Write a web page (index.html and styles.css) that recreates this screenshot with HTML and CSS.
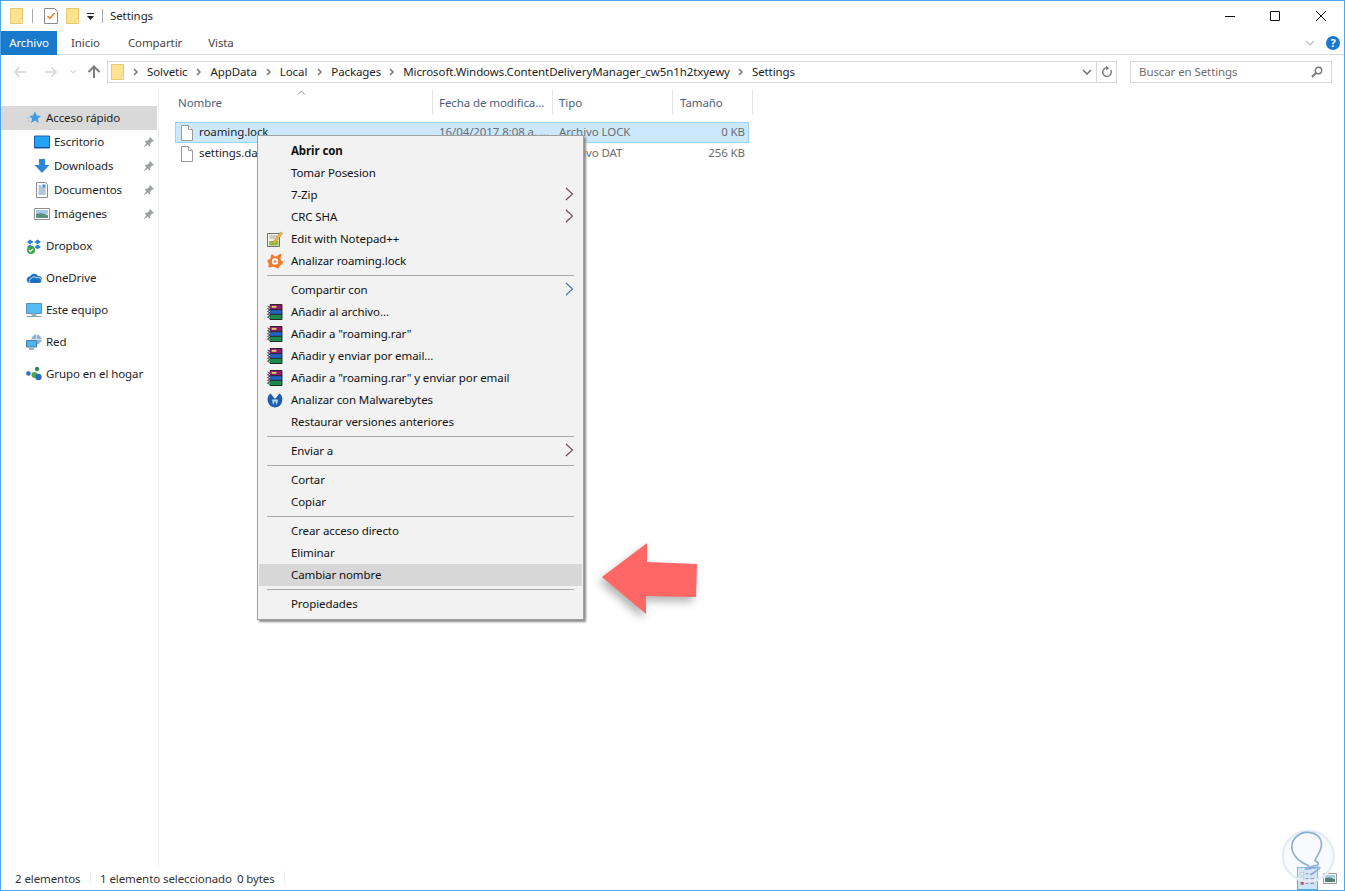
FILE: index.html
```html
<!DOCTYPE html>
<html lang="es">
<head>
<meta charset="utf-8">
<title>Settings</title>
<link rel="stylesheet" href="styles.css">
</head>
<body>
<svg class="defs" width="0" height="0" aria-hidden="true">
  <symbol id="folder" viewBox="0 0 14 18"><path d="M.5 1.500h12v15H.5z" fill="#fde38f" stroke="#e6c86e"/><path d="M10 12h2.500v4.500H10z" fill="#fff3c4" stroke="#e6c86e" stroke-width=".7"/></symbol>
  <symbol id="file" viewBox="0 0 12 16"><path d="M.5.500h7l4 4v11H.5z" fill="#fff" stroke="#9a9a9a"/><path d="M7.500.500v4h4" fill="#f3f3f3" stroke="#9a9a9a"/></symbol>
  <symbol id="pin" viewBox="0 0 12 12"><path d="M7 1l4 4-1 .8-.8-.3-2 2 .1 2-1 .8-1.600-1.800L1.500 11 1 10.500l2.500-3.200L1.700 5.700l.8-1 2 .1 2-2L6.200 2z" fill="#9ba0a6"/></symbol>
  <symbol id="rar" viewBox="0 0 17 17"><path d="M3 .5h13v5.500H3z" fill="#8e1a6c"/><path d="M3 6h13v5H3z" fill="#2461c4"/><path d="M3 11h13v5.500H3z" fill="#1c8a4c"/><path d="M3 .5h13M3 6h13M3 11h13M3 16.500h13" stroke="#1d1d1d" stroke-width="1"/><path d="M16 .5v16" stroke="#1d1d1d" stroke-width=".8"/><path d="M.5 2l3 1.500-3 1.500 3 1.500-3 1.500 3 1.500-3 1.500 3 1.500-3 1.500 3 1.500" fill="none" stroke="#3c3c3c" stroke-width="1"/><path d="M5 2h5v2H5z" fill="#e8cf6a"/></symbol>
  <symbol id="chev" viewBox="0 0 8 8"><path d="M2 1l3 3-3 3" fill="none" stroke="#777" stroke-width="1.500"/></symbol>
  <symbol id="sub" viewBox="0 0 9 14"><path d="M1 1l6.500 6L1 13" fill="none" stroke="currentColor" stroke-width="1.100"/></symbol>
</svg>

<div class="window">
  <header class="titlebar">
    <svg class="ic-16 t-folder"><use href="#folder"/></svg>
    <span class="t-sep"></span>
    <svg class="ic-16 t-check" viewBox="0 0 14 18"><path d="M.5 1.500h10l3 3v12H.5z" fill="#fff" stroke="#8a8a8a"/><path d="M3.500 9l2.500 2.500L10.500 6" fill="none" stroke="#ee7b2c" stroke-width="1.500"/></svg>
    <svg class="ic-16 t-folder2"><use href="#folder"/></svg>
    <svg class="t-drop" viewBox="0 0 9 9"><path d="M1 1.500h7" stroke="#222"/><path d="M1 4h7L4.500 8z" fill="#222"/></svg>
    <span class="t-sep t-sep2"></span>
    <span class="t-name">Settings</span>
    <div class="winctl">
      <svg viewBox="0 0 12 12"><path d="M1 6.500h10" stroke="#111"/></svg>
      <svg viewBox="0 0 12 12"><path d="M1.500 1.500h9v9h-9z" fill="none" stroke="#111"/></svg>
      <svg viewBox="0 0 12 12"><path d="M1 1l10 10M11 1L1 11" stroke="#111"/></svg>
    </div>
  </header>

  <nav class="tabs">
    <span class="tab tab-file">Archivo</span>
    <span class="tab tab-inicio">Inicio</span>
    <span class="tab tab-comp">Compartir</span>
    <span class="tab tab-vista">Vista</span>
    <div class="tabs-right">
      <svg class="rib-chev" viewBox="0 0 10 6"><path d="M1 1l4 4 4-4" fill="none" stroke="#b9bcc2" stroke-width="1.200"/></svg>
      <span class="help">?</span>
    </div>
  </nav>

  <div class="addressrow">
    <div class="navbtns">
      <svg class="n-back" viewBox="0 0 14 12"><path d="M13 6H2M6.500 1.500L2 6l4.500 4.500" fill="none" stroke="#d6d6d6" stroke-width="1.600"/></svg>
      <svg class="n-fwd" viewBox="0 0 14 12"><path d="M1 6h11M7.500 1.500L12 6l-4.500 4.500" fill="none" stroke="#d6d6d6" stroke-width="1.600"/></svg>
      <svg class="n-down" viewBox="0 0 8 6"><path d="M1 1l3 3 3-3" fill="none" stroke="#d6d6d6" stroke-width="1.200"/></svg>
      <svg class="n-up" viewBox="0 0 14 14"><path d="M7 13V2M1.500 7L7 1.500 12.500 7" fill="none" stroke="#7d7d7d" stroke-width="2"/></svg>
    </div>
    <div class="address">
      <svg class="ic-16 a-folder"><use href="#folder"/></svg>
      <svg class="crumb-sep"><use href="#chev"/></svg><span class="crumb c1">Solvetic</span>
      <svg class="crumb-sep"><use href="#chev"/></svg><span class="crumb c2">AppData</span>
      <svg class="crumb-sep"><use href="#chev"/></svg><span class="crumb c3">Local</span>
      <svg class="crumb-sep"><use href="#chev"/></svg><span class="crumb c4">Packages</span>
      <svg class="crumb-sep"><use href="#chev"/></svg><span class="crumb c5">Microsoft.Windows.ContentDeliveryManager_cw5n1h2txyewy</span>
      <svg class="crumb-sep"><use href="#chev"/></svg><span class="crumb c6">Settings</span>
      <svg class="a-drop" viewBox="0 0 10 6"><path d="M1 1l4 4 4-4" fill="none" stroke="#6e6e6e" stroke-width="1.500"/></svg>
      <button class="a-refresh"><svg viewBox="0 0 12 12"><path d="M9.800 4A4.300 4.300 0 1 1 6 1.800" fill="none" stroke="#7c7c7c" stroke-width="1.500"/><path d="M5 .0l3.500 2L5 4.200z" fill="#7c7c7c"/></svg></button>
    </div>
    <div class="search">
      <span>Buscar en Settings</span>
      <svg viewBox="0 0 12 12"><circle cx="7.500" cy="4.500" r="3.200" fill="none" stroke="#777" stroke-width="1.400"/><path d="M5 7l-4 4" stroke="#777" stroke-width="2"/></svg>
    </div>
  </div>

  <main class="main">
    <aside class="sidebar">
      <div class="nav-group">
        <div class="nav-item active"><svg class="nav-ic" viewBox="0 0 16 16"><path d="M9 1.500l1.700 4 4.300.4-3.300 2.800 1 4.300L9 10.400 5 13l1-4.300-2.700-2.800 3.700-.4z" fill="#3d9be8"/><path d="M0 8h4M1 11h3" stroke="#9ccbf2"/></svg><span>Acceso rápido</span></div>
        <div class="nav-item sub"><svg class="nav-ic" viewBox="0 0 16 16"><path d="M.5 2h15v12H.5z" fill="#23a4f3" stroke="#1a62b0"/><path d="M1 13h14v1H1z" fill="#0b4f99"/></svg><span>Escritorio</span><svg class="pin"><use href="#pin"/></svg></div>
        <div class="nav-item sub"><svg class="nav-ic" viewBox="0 0 16 16"><path d="M5 1h6v6h4.500L8 15 .5 7H5z" fill="#2f86d9"/></svg><span>Downloads</span><svg class="pin"><use href="#pin"/></svg></div>
        <div class="nav-item sub"><svg class="nav-ic" viewBox="0 0 16 16"><path d="M2.500.5h9l2 2v13h-11z" fill="#fdfdfd" stroke="#8c8c8c"/><path d="M4.500 4h3M4.500 6h7M4.500 8h7M4.500 10h7M4.500 12h7" stroke="#6f8fb0"/><path d="M8.500 2.500h3v3h-3z" fill="#3d8fd9"/></svg><span>Documentos</span><svg class="pin"><use href="#pin"/></svg></div>
        <div class="nav-item sub"><svg class="nav-ic" viewBox="0 0 16 16"><path d="M.5 2.500h15v11H.5z" fill="#fff" stroke="#8e8e8e"/><path d="M2 4h12v4H2z" fill="#a8c8e8"/><path d="M2 8l5-1 7 2v3H2z" fill="#5d8f7d"/></svg><span>Imágenes</span><svg class="pin"><use href="#pin"/></svg></div>
      </div>
      <div class="nav-group"><div class="nav-item"><svg class="nav-ic" viewBox="0 0 16 16"><path d="M4 1.500L1 4l3 2.300L7.500 4zM11.500 1.500L8.500 4l3 2.300L15 4zM4 6.500L1 9l3 2.300L7.500 9zM11.500 6.500L8.500 9l3 2.300L15 9z" fill="#2a7fd8"/><circle cx="5" cy="12" r="4" fill="#3fa34a"/><path d="M3 12l1.500 1.500L7 10.800" fill="none" stroke="#fff" stroke-width="1.200"/></svg><span>Dropbox</span></div></div>
      <div class="nav-group"><div class="nav-item"><svg class="nav-ic" viewBox="0 0 16 16"><path d="M3.500 13A3 3 0 0 1 1 8.800 3 3 0 0 1 4 6.500 4.500 4.500 0 0 1 12 6a3.500 3.500 0 0 1 3.800 4.500A3 3 0 0 1 13 13z" fill="#1a6fc0"/><path d="M4.500 13a2.500 2.500 0 0 1 .5-4.500 4 4 0 0 1 6-.5 3 3 0 0 1 4.500 3" fill="none" stroke="#fff" stroke-width=".8"/></svg><span>OneDrive</span></div></div>
      <div class="nav-group"><div class="nav-item"><svg class="nav-ic" viewBox="0 0 16 16"><path d="M.5 1.500h15v10H.5z" fill="#56bdf4" stroke="#5a93bd"/><path d="M6 12h4v1.500H6zM.5 14.500h15" stroke="#8aa5b8" fill="#bcd0dc"/></svg><span>Este equipo</span></div></div>
      <div class="nav-group"><div class="nav-item"><svg class="nav-ic" viewBox="0 0 16 16"><circle cx="10.500" cy="5.500" r="5" fill="#8fb3d6"/><path d="M6 5.500h9M10.500 .5v10" stroke="#fff" stroke-width=".6"/><path d="M.5 6.500h10v6.500H.5z" fill="#4fb3ef" stroke="#4c7da3"/><path d="M3 15h5" stroke="#7a96aa" stroke-width="1.500"/></svg><span>Red</span></div></div>
      <div class="nav-group"><div class="nav-item"><svg class="nav-ic" viewBox="0 0 16 16"><circle cx="2.500" cy="7.500" r="2.300" fill="#2d6fc0"/><circle cx="11" cy="3" r="2.200" fill="#2b8a5c"/><circle cx="8.500" cy="9" r="3" fill="#55a845"/><circle cx="12.500" cy="11" r="3.200" fill="#2d6fc0"/></svg><span>Grupo en el hogar</span></div></div>
    </aside>

    <section class="files">
      <div class="sort-caret"><svg viewBox="0 0 9 5"><path d="M1 4.500l3.500-3.500 3.500 3.500" fill="none" stroke="#8a8a8a"/></svg></div>
      <div class="colhead">
        <span class="col-name">Nombre</span>
        <span class="col-date">Fecha de modifica...</span>
        <span class="col-type">Tipo</span>
        <span class="col-size">Tamaño</span>
      </div>
      <div class="row selected">
        <span class="cell-name"><svg class="file-ic"><use href="#file"/></svg><span class="t">roaming.lock</span></span>
        <span class="cell-date t">16/04/2017 8:08 a. ...</span>
        <span class="cell-type t">Archivo LOCK</span>
        <span class="cell-size t">0 KB</span>
      </div>
      <div class="row">
        <span class="cell-name"><svg class="file-ic"><use href="#file"/></svg><span class="t">settings.dat</span></span>
        <span class="cell-date t">16/04/2017 8:08 a. ...</span>
        <span class="cell-type t">Archivo DAT</span>
        <span class="cell-size t">256 KB</span>
      </div>
    </section>
  </main>

  <footer class="status">
    <span class="st-a">2 elementos</span>
    <span class="st-sep"></span>
    <span class="st-b">1 elemento seleccionado</span>
    <span class="st-c">0 bytes</span>
    <span class="st-sep"></span>
    <div class="views">
      <span class="view-details"><svg viewBox="0 0 20 20"><path d="M3 4h3v3H3zM3 9h3v3H3z" fill="#fff" stroke="#8fa5b5" stroke-width=".7"/><path d="M3 14h3v3H3z" fill="#d33" stroke="#8fa5b5" stroke-width=".7"/><path d="M8 5.500h3M13 5.500h4M8 10.500h3M13 10.500h4M8 15.500h3M13 15.500h4" stroke="#778"/></svg></span>
      <span class="view-large"><svg viewBox="0 0 14 11"><path d="M.5.500h13v10H.5z" fill="#fff" stroke="#9a9a9a"/><path d="M2 2h10v3H2z" fill="#a9cbe8"/><path d="M2 5l5-.5 5 1.500v3H2z" fill="#4f8073"/></svg></span>
    </div>
  </footer>
</div>

<div class="menu">
  <div class="mi strong">Abrir con</div>
  <div class="mi">Tomar Posesion</div>
  <div class="mi">7-Zip<svg class="arrow"><use href="#sub"/></svg></div>
  <div class="mi">CRC SHA<svg class="arrow"><use href="#sub"/></svg></div>
  <div class="mi"><svg class="mi-ic" viewBox="0 0 16 16"><path d="M.5 2.500h12V15.500H.5z" fill="#f4f4ec" stroke="#6f6f6f"/><path d="M2 10h9.500v4.500H2z" fill="#8bc34a"/><path d="M2.500 5h8M2.500 7h6" stroke="#a0a0a0"/><path d="M6 11l7.500-10 2 1.500L8 12.500l-2.500 1z" fill="#f2b632" stroke="#8a6a1a" stroke-width=".4"/></svg>Edit with Notepad++</div>
  <div class="mi"><svg class="mi-ic" viewBox="0 0 16 16"><path d="M5 1.500c1.500 0 2 2 3.500 2S12 1 14 .8c1 2-1 4-.5 5.500s2.500 2 2.500 3.500-2 2-3 3-1 2.500-2.500 2.500-2.500-1.500-4-1.500S2.500 15 1.500 14c-.8-1 .7-2.500.2-3.500S0 8.500 .5 7.500 3 6.500 3.500 5 3.500 1.500 5 1.500z" fill="#f5792a"/><circle cx="8" cy="8.500" r="3.200" fill="#fff"/><path d="M6.500 8.500h3M8 7v3" stroke="#f5792a" stroke-width="1.200"/></svg>Analizar roaming.lock</div>
  <div class="msep"></div>
  <div class="mi">Compartir con<svg class="arrow arrow-blue"><use href="#sub"/></svg></div>
  <div class="mi"><svg class="mi-ic"><use href="#rar"/></svg>Añadir al archivo...</div>
  <div class="mi"><svg class="mi-ic"><use href="#rar"/></svg>Añadir a "roaming.rar"</div>
  <div class="mi"><svg class="mi-ic"><use href="#rar"/></svg>Añadir y enviar por email...</div>
  <div class="mi"><svg class="mi-ic"><use href="#rar"/></svg>Añadir a "roaming.rar" y enviar por email</div>
  <div class="mi"><svg class="mi-ic" viewBox="0 0 16 16"><path d="M3.500 1.500C1 3 0 6.500 1 10s3.500 5 7 5.500c3.500-.5 6-2 7-5.500s0-7-2.500-8.500C10.500 3.500 9.500 5.500 8 7 6.500 5.500 5.500 3.500 3.500 1.500z" fill="#1f5fae"/><path d="M5 7.500c.5 2.500.5 4 1.500 5.500.3-2 .8-3 1.500-4 .7 1 1.200 2 1.500 4 1-1.500 1-3 1.500-5.500" fill="#bcd4ee"/></svg>Analizar con Malwarebytes</div>
  <div class="mi">Restaurar versiones anteriores</div>
  <div class="msep"></div>
  <div class="mi">Enviar a<svg class="arrow"><use href="#sub"/></svg></div>
  <div class="msep"></div>
  <div class="mi">Cortar</div>
  <div class="mi">Copiar</div>
  <div class="msep"></div>
  <div class="mi">Crear acceso directo</div>
  <div class="mi">Eliminar</div>
  <div class="mi hot">Cambiar nombre</div>
  <div class="msep"></div>
  <div class="mi">Propiedades</div>
</div>

<svg class="callout" viewBox="0 0 100 72"><path d="M2 35L47 1v19l50 2-1 33-50-1v18z" fill="#ff6666"/></svg>

<svg class="watermark" viewBox="0 0 315 213"><circle cx="205" cy="108" r="76" fill="rgba(232,238,248,.28)" stroke="#e6ecf6" stroke-width="7"/><path d="M207 137c-22-8-42-20-50-45-8-32 18-56 48-55 30 2 44 22 38 46-4 18-14 28-18 38 6 6 14 6 8 14-12 4-30 4-36 12 10 2 34-8 42-4-6 10-22 16-28 22" fill="none" stroke="#8caed6" stroke-width="5"/></svg>
</body>
</html>
```
FILE: styles.css
```css
* { box-sizing: border-box; }
html, body { margin: 0; height: 100%; }
body {
  font-family: "Noto Sans", "Open Sans", sans-serif;
  font-size: 11.5px;
  letter-spacing: -0.09px;
  color: #1e1e1e;
  background: #fff;
  overflow: hidden;
  position: relative;
}
.defs { position: absolute; }
svg { display: block; flex: none; }

.window {
  width: 1345px;
  height: 891px;
  border: 1px solid #4ea5ec;
  display: flex;
  flex-direction: column;
}

/* title bar */
.titlebar { height: 30px; display: flex; align-items: center; padding-left: 9px; flex: none; }
.ic-16 { width: 14px; height: 18px; }
.t-sep { width: 1px; height: 14px; background: #a9a9a9; margin-left: 8px; }
.t-check { margin-left: 11px; }
.t-folder2 { margin-left: 8px; }
.t-drop { width: 9px; height: 9px; margin-left: 6px; }
.t-sep2 { margin-left: 7px; }
.t-name { margin-left: 7px; padding-bottom: 2px; }
.winctl { margin-left: auto; display: flex; gap: 33px; padding-right: 17px; }
.winctl svg { width: 12px; height: 12px; }
.winctl svg:first-child { margin-right: 1px; margin-left: -1px; }
.winctl svg:nth-child(2) { margin-right: 1px; margin-left: -1px; }

/* ribbon tabs */
.tabs { height: 24px; display: flex; align-items: center; border-bottom: 1px solid #dadbdc; flex: none; color: #444; }
.tab { line-height: 23px; }
.tab-file { width: 56px; height: 24px; background: #1979ca; color: #fff; text-align: center; align-self: flex-start; }
.tab-inicio { margin-left: 14px; }
.tab-comp { margin-left: 28px; }
.tab-vista { margin-left: 26px; }
.tabs-right { margin-left: auto; display: flex; align-items: center; gap: 11px; padding-right: 4px; }
.rib-chev { width: 10px; height: 6px; }
.help {
  width: 14px; height: 14px; border-radius: 50%;
  background: #1b78cf; color: #fff; font-weight: 700; font-size: 11px;
  line-height: 14px; text-align: center;
}

/* address row */
.addressrow { height: 35px; display: flex; align-items: flex-start; padding-top: 6px; flex: none; }
.navbtns { width: 106px; height: 22px; display: flex; align-items: center; padding-left: 12px; }
.n-back, .n-fwd { width: 14px; height: 12px; }
.n-fwd { margin-left: 17px; }
.n-down { width: 8px; height: 6px; margin-left: 11px; }
.n-up { width: 14px; height: 14px; margin-left: 10px; }
.address {
  width: 1010px; height: 22px; border: 1px solid #d9d9d9;
  display: flex; align-items: center; padding-left: 3px; position: relative;
}
.a-folder { margin-right: 7px; }
.crumb-sep { width: 8px; height: 8px; }
.crumb { margin: 0 7px; padding-bottom: 2px; }
.c1 { margin-right: 8px; }
.c2 { margin-right: 8px; }
.c3 { margin-right: 9px; }
.c5 { margin-right: 7px; }
.a-drop { width: 10px; height: 6px; margin-left: auto; margin-right: 4px; }
.a-refresh {
  width: 20px; height: 20px; border: 0; border-left: 1px solid #d9d9d9;
  background: none; padding: 0 0 0 4px; display: flex; align-items: center;
}
.a-refresh svg { width: 12px; height: 12px; }
.search {
  width: 202px; height: 22px; margin-left: 13px; border: 1px solid #d9d9d9;
  display: flex; align-items: center; justify-content: space-between;
  padding: 0 8px; color: #6d6d6d;
}
.search span { padding-bottom: 2px; }
.search svg { width: 12px; height: 12px; }

/* main */
.main { flex: 1; display: flex; min-height: 0; }
.sidebar { width: 158px; border-right: 1px solid #f0f0f0; padding-top: 16px; flex: none; }
.nav-group { margin-bottom: 8px; }
.nav-item { height: 24px; display: flex; align-items: center; padding-left: 25px; position: relative; }
.nav-item span { padding-bottom: 2px; }
.nav-item.active { background: #d9d9d9; width: 156px; }
.nav-item.sub { padding-left: 33px; }
.nav-ic { width: 16px; height: 16px; margin-right: 4px; }
.pin { width: 12px; height: 12px; position: absolute; left: 142px; top: 6px; }

.files { flex: 1; position: relative; padding-left: 16px; }
.sort-caret { position: absolute; left: 138px; top: 0; }
.sort-caret svg { width: 9px; height: 5px; }
.colhead { height: 32px; display: grid; grid-template-columns: 258px 120px 120px 80px; align-items: start; color: #4c607a; }
.colhead span { padding: 5px 0 0 6px; line-height: 16px; border-right: 1px solid #e5e5e5; height: 25px; }
.colhead .col-name { padding-left: 3px; }
.colhead .col-size { padding-left: 7px; }
.row { height: 21px; width: 574px; display: grid; grid-template-columns: 258px 120px 120px 74px; align-items: center; border: 1px solid transparent; color: #6d6d6d; }
.row.selected { background: #cce8ff; border-color: #99d1ff; }
.t { padding-bottom: 2px; }
.cell-name { display: flex; align-items: center; color: #1e1e1e; padding-left: 5px; }
.file-ic { width: 12px; height: 16px; margin-right: 6px; }
.cell-date, .cell-type { padding-left: 5px; }
.cell-size { text-align: right; padding-right: 3px; }

/* status */
.status { height: 24px; display: flex; align-items: center; padding-left: 14px; flex: none; color: #333; position: relative; }
.st-sep { width: 1px; height: 14px; background: #efefef; }
.st-a { width: 75px; }
.st-b { margin-left: 9px; }
.st-c { margin-left: 5px; width: 47px; }
.views { margin-left: auto; display: flex; align-items: center; gap: 5px; padding-right: 7px; height: 24px; }
.view-details { width: 21px; height: 23px; background: #cce4f7; border: 1px solid #54aee0; display: block; }
.view-details svg { width: 19px; height: 20px; }
.view-large { width: 14px; height: 11px; display: block; }
.view-large svg { width: 14px; height: 11px; }

/* context menu */
.menu {
  position: absolute; left: 257px; top: 135px; width: 327px; height: 485px;
  background: #f2f2f2; border: 1px solid #a0a0a0;
  box-shadow: 2px 2px 2px #8c8c8c;
  padding: 4px 1px;
  color: #111;
}
.mi { height: 22px; display: flex; align-items: center; padding: 0 0 2px 32px; position: relative; }
.mi.strong { font-weight: 700; }
.mi.hot { background: #d7d7d7; }
.mi-ic { width: 16px; height: 16px; position: absolute; left: 8px; top: 3px; }
.arrow { width: 9px; height: 14px; position: absolute; left: 306px; top: 3px; color: #6b4a55; }
.arrow-blue { color: #3f78ad; }
.msep { height: 7px; padding-top: 3px; margin: 0 8px; }
.msep::before { content: ""; display: block; height: 1px; background: #a8a8a8; }

/* annotation overlays */
.callout {
  position: absolute; left: 600px; top: 542px; width: 100px; height: 72px;
  filter: drop-shadow(-3px 5px 4px rgba(90, 90, 90, .45));
}
.watermark { position: absolute; right: 0; bottom: 0; width: 105px; height: 71px; }
```
